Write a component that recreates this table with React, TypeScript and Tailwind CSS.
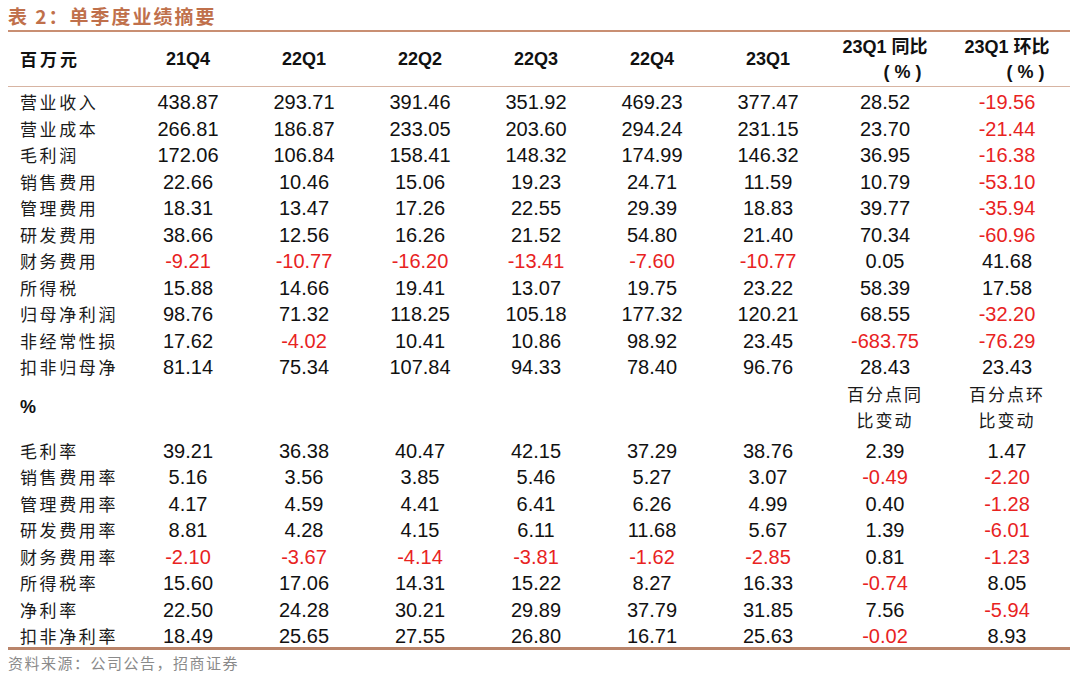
type Row = { label: string; values: string[] };

const amountRows: Row[] = [
  { label: "营业收入", values: ["438.87", "293.71", "391.46", "351.92", "469.23", "377.47", "28.52", "-19.56"] },
  { label: "营业成本", values: ["266.81", "186.87", "233.05", "203.60", "294.24", "231.15", "23.70", "-21.44"] },
  { label: "毛利润", values: ["172.06", "106.84", "158.41", "148.32", "174.99", "146.32", "36.95", "-16.38"] },
  { label: "销售费用", values: ["22.66", "10.46", "15.06", "19.23", "24.71", "11.59", "10.79", "-53.10"] },
  { label: "管理费用", values: ["18.31", "13.47", "17.26", "22.55", "29.39", "18.83", "39.77", "-35.94"] },
  { label: "研发费用", values: ["38.66", "12.56", "16.26", "21.52", "54.80", "21.40", "70.34", "-60.96"] },
  { label: "财务费用", values: ["-9.21", "-10.77", "-16.20", "-13.41", "-7.60", "-10.77", "0.05", "41.68"] },
  { label: "所得税", values: ["15.88", "14.66", "19.41", "13.07", "19.75", "23.22", "58.39", "17.58"] },
  { label: "归母净利润", values: ["98.76", "71.32", "118.25", "105.18", "177.32", "120.21", "68.55", "-32.20"] },
  { label: "非经常性损", values: ["17.62", "-4.02", "10.41", "10.86", "98.92", "23.45", "-683.75", "-76.29"] },
  { label: "扣非归母净", values: ["81.14", "75.34", "107.84", "94.33", "78.40", "96.76", "28.43", "23.43"] },
];

const ratioRows: Row[] = [
  { label: "毛利率", values: ["39.21", "36.38", "40.47", "42.15", "37.29", "38.76", "2.39", "1.47"] },
  { label: "销售费用率", values: ["5.16", "3.56", "3.85", "5.46", "5.27", "3.07", "-0.49", "-2.20"] },
  { label: "管理费用率", values: ["4.17", "4.59", "4.41", "6.41", "6.26", "4.99", "0.40", "-1.28"] },
  { label: "研发费用率", values: ["8.81", "4.28", "4.15", "6.11", "11.68", "5.67", "1.39", "-6.01"] },
  { label: "财务费用率", values: ["-2.10", "-3.67", "-4.14", "-3.81", "-1.62", "-2.85", "0.81", "-1.23"] },
  { label: "所得税率", values: ["15.60", "17.06", "14.31", "15.22", "8.27", "16.33", "-0.74", "8.05"] },
  { label: "净利率", values: ["22.50", "24.28", "30.21", "29.89", "37.79", "31.85", "7.56", "-5.94"] },
  { label: "扣非净利率", values: ["18.49", "25.65", "27.55", "26.80", "16.71", "25.63", "-0.02", "8.93"] },
];

const quarters = ["21Q4", "22Q1", "22Q2", "22Q3", "22Q4", "23Q1"];
const grid = "grid grid-cols-[122px_116px_116px_116px_116px_116px_116px_118px_126px]";
const sans = "font-[family-name:'Liberation_Sans',Arial,'Noto_Sans_CJK_SC',sans-serif]";
const cjk = "font-[family-name:'Noto_Sans_CJK_SC','Noto_Sans_CJK_TC',sans-serif]";

function DataRow({ row }: { row: Row }) {
  return (
    <div className={`${grid} h-[26.5px] items-center`}>
      <div className={`${cjk} pl-[12px] text-[17px] tracking-[2.6px] text-[#1a1a1a] whitespace-nowrap`}>
        {row.label}
      </div>
      {row.values.map((v, i) => (
        <div
          key={i}
          className={`${sans} text-center text-[20px] ${v.startsWith("-") ? "text-[#e8231f]" : "text-[#111]"}`}
        >
          {v}
        </div>
      ))}
    </div>
  );
}

export default function App() {
  return (
    <div className="w-[1080px] h-[683px] bg-white overflow-hidden">
      <div className="mx-[8px] w-[1062px]">
        <div className={`${cjk} h-[30px] flex items-center pt-[2px] text-[19px] font-bold tracking-[2px] text-[#c0704b]`}>
          表 2：单季度业绩摘要
        </div>
        <div className="h-[2px] bg-[#c98f73]" />

        {/* header */}
        <div className={`${grid} h-[55px] items-center border-b border-[#d7b4a2] font-bold text-[#111]`}>
          <div className={`${cjk} pl-[12px] text-[17px] tracking-[3px]`}>百万元</div>
          {quarters.map((q) => (
            <div key={q} className={`${sans} text-center text-[18px]`}>
              {q}
            </div>
          ))}
          <div className={`${sans} flex flex-col items-center pt-[2px] text-[18px] leading-[25px]`}>
            <div>23Q1 同比</div>
            <div className="pl-[40px] tracking-[5px]">(%)</div>
          </div>
          <div className={`${sans} flex flex-col items-center pt-[2px] text-[18px] leading-[25px]`}>
            <div>23Q1 环比</div>
            <div className="pl-[42px] tracking-[5px]">(%)</div>
          </div>
        </div>

        {amountRows.map((r) => (
          <DataRow key={r.label} row={r} />
        ))}

        {/* ratio section header */}
        <div className={`${grid} h-[57px] items-center`}>
          <div className={`${sans} pl-[12px] text-[18px] font-bold text-[#111]`}>%</div>
          <div className="col-span-6" />
          <div className={`${cjk} flex flex-col items-center text-[17px] tracking-[2px] leading-[26px] text-[#1a1a1a]`}>
            <div>百分点同</div>
            <div>比变动</div>
          </div>
          <div className={`${cjk} flex flex-col items-center text-[17px] tracking-[2px] leading-[26px] text-[#1a1a1a]`}>
            <div>百分点环</div>
            <div>比变动</div>
          </div>
        </div>

        {ratioRows.map((r) => (
          <DataRow key={r.label} row={r} />
        ))}

        <div className="mt-[-1px] h-[3px] bg-[#b9846a]" />
        <div className={`${cjk} pt-[2px] text-[15px] tracking-[1.5px] text-[#8a8a8a]`}>
          资料来源：公司公告，招商证券
        </div>
      </div>
    </div>
  );
}
